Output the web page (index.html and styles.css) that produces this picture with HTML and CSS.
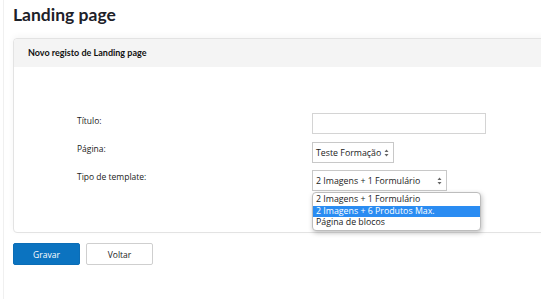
FILE: index.html
```html
<!DOCTYPE html>
<html>
<head>
<meta charset="utf-8">
<link rel="stylesheet" href="styles.css">
</head>
<body>
<div class="page">
  <h1 class="title">Landing page</h1>
  <div class="card">
    <div class="card-header">Novo registo de Landing page</div>
    <div class="card-body">
      <div class="form">
        <div class="label">Título:</div>
        <div class="field"><div class="input"></div></div>
        <div class="label">Página:</div>
        <div class="field"><div class="select sel-short"><span>Teste Formação</span><svg class="arrows" width="5" height="8" viewBox="0 0 5 8"><path d="M2.5 0.5 L4.5 3 L0.5 3 Z M2.5 7.5 L4.5 5 L0.5 5 Z" fill="#666"/></svg></div></div>
        <div class="label">Tipo de template:</div>
        <div class="field">
          <div class="select sel-long"><span>2 Imagens + 1 Formulário</span><svg class="arrows" width="5" height="8" viewBox="0 0 5 8"><path d="M2.5 0.5 L4.5 3 L0.5 3 Z M2.5 7.5 L4.5 5 L0.5 5 Z" fill="#666"/></svg></div>
          <div class="dropdown">
            <div class="opt">2 Imagens + 1 Formulário</div>
            <div class="opt active">2 Imagens + 6 Produtos Max.</div>
            <div class="opt">Página de blocos</div>
          </div>
        </div>
      </div>
    </div>
  </div>
  <div class="actions">
    <button class="btn btn-primary">Gravar</button>
    <button class="btn btn-default">Voltar</button>
  </div>
</div>
</body>
</html>
```
FILE: styles.css
```css
html, body {
  margin: 0;
  padding: 0;
  background: #ffffff;
}
body {
  font-family: "Open Sans", "Noto Sans", sans-serif;
  color: #222;
  overflow: hidden;
  width: 541px;
  height: 299px;
}
.page {
  margin-left: 3px;
  border-left: 1px solid #f0f0f0;
  padding-left: 9px;
  height: 299px;
  overflow: hidden;
}
.title {
  margin: 0;
  padding-top: 4px;
  font-family: "Lato", sans-serif;
  font-weight: 700;
  font-size: 17.5px;
  line-height: 22px;
  color: #1d2129;
  height: 34px;
}
.card {
  width: 560px;
  border: 1px solid #e3e3e3;
  border-radius: 4px;
  background: #fff;
  box-shadow: 0 -2px 6px rgba(0,0,0,0.04);
}
.card-header {
  background: #f4f4f4;
  height: 28px;
  line-height: 28px;
  padding-left: 14px;
  font-family: "Lato", sans-serif;
  font-weight: 700;
  font-size: 9px;
  color: #111;
  border-radius: 4px 4px 0 0;
}
.card-body {
  padding: 47px 0 41px 63px;
}
.form {
  display: grid;
  grid-template-columns: 235px 1fr;
  grid-auto-rows: 21px;
  row-gap: 7px;
}
.label {
  font-size: 8.5px;
  line-height: 14px;
  color: #222;
}
.field {
  position: relative;
}
.input {
  width: 172px;
  height: 19px;
  border: 1px solid #d4d4d4;
  box-sizing: content-box;
  margin-top: -1px;
}
.select {
  display: flex;
  align-items: center;
  justify-content: space-between;
  box-sizing: border-box;
  height: 21px;
  border: 1px solid #c8c8c8;
  padding: 0 4px 0 3px;
  font-size: 8.8px;
  color: #222;
  background: #fff;
}
.sel-short { width: 82px; }
.sel-long { width: 135px; }
.arrows { display: block; }
.dropdown {
  position: absolute;
  left: 0;
  top: 22px;
  width: 167px;
  background: #fff;
  border: 1px solid #bdbdbd;
  border-radius: 4px;
  box-shadow: 1px 2px 5px rgba(0,0,0,0.25);
  padding: 1px 0 1px 0;
  z-index: 5;
  overflow: hidden;
}
.opt {
  height: 11.5px;
  line-height: 11.5px;
  padding-left: 3px;
  font-size: 8.8px;
  color: #222;
}
.opt.active {
  background: #2a8cf2;
  color: #fff;
}
.actions {
  display: flex;
  gap: 6px;
  margin-top: 10px;
}
.btn {
  height: 22px;
  font-family: "Open Sans", sans-serif;
  font-size: 8.5px;
  padding: 0;
  border-radius: 2px;
  cursor: pointer;
}
.btn-primary {
  width: 67px;
  background: #0b73c0;
  color: #fff;
  border: 1px solid #0b6db6;
}
.btn-default {
  width: 67px;
  background: #fff;
  color: #222;
  border: 1px solid #cfcfcf;
}
```
